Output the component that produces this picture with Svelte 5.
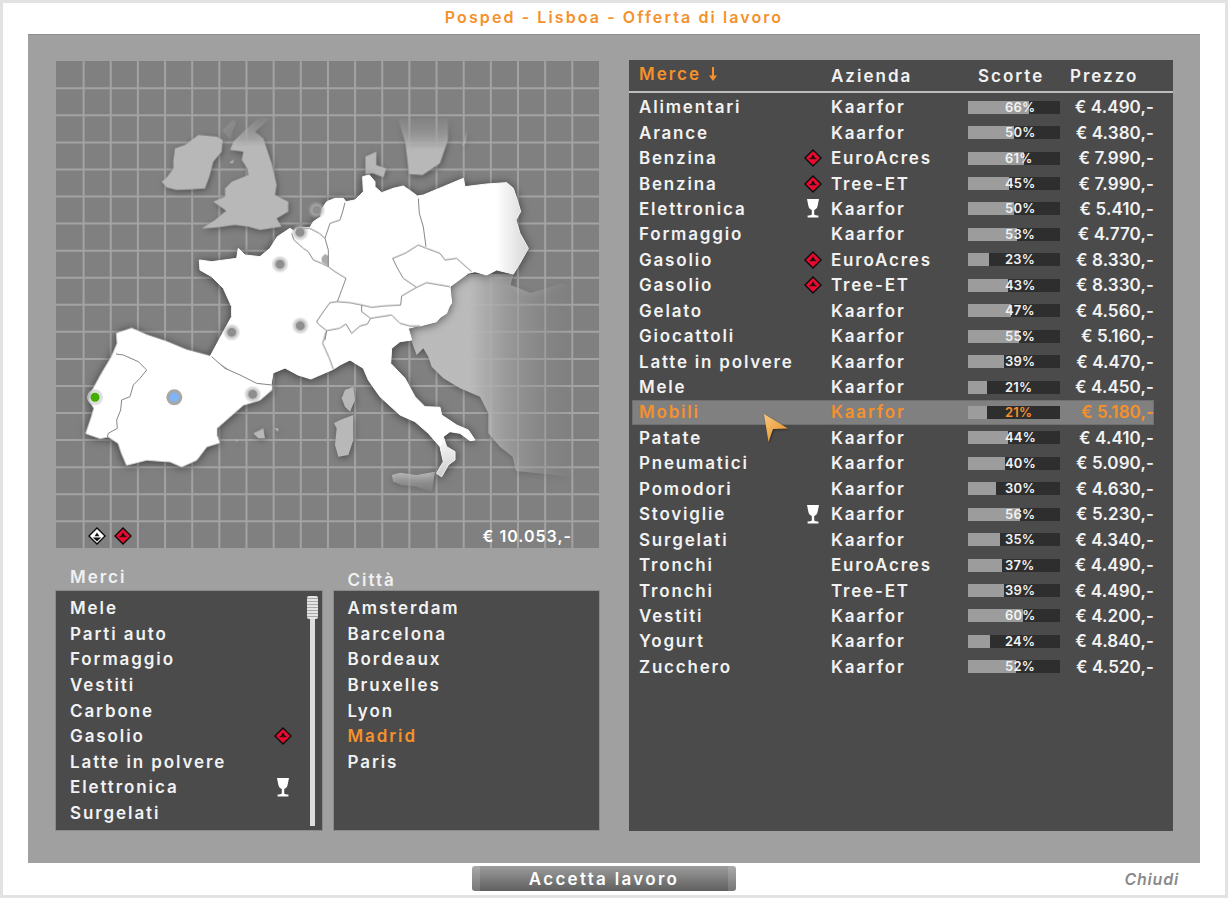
<script>
  const rows = [
    ['Alimentari', '', 'Kaarfor', 66, '€ 4.490,-'],
    ['Arance', '', 'Kaarfor', 50, '€ 4.380,-'],
    ['Benzina', 'd', 'EuroAcres', 61, '€ 7.990,-'],
    ['Benzina', 'd', 'Tree-ET', 45, '€ 7.990,-'],
    ['Elettronica', 'g', 'Kaarfor', 50, '€ 5.410,-'],
    ['Formaggio', '', 'Kaarfor', 53, '€ 4.770,-'],
    ['Gasolio', 'd', 'EuroAcres', 23, '€ 8.330,-'],
    ['Gasolio', 'd', 'Tree-ET', 43, '€ 8.330,-'],
    ['Gelato', '', 'Kaarfor', 47, '€ 4.560,-'],
    ['Giocattoli', '', 'Kaarfor', 55, '€ 5.160,-'],
    ['Latte in polvere', '', 'Kaarfor', 39, '€ 4.470,-'],
    ['Mele', '', 'Kaarfor', 21, '€ 4.450,-'],
    ['Mobili', '', 'Kaarfor', 21, '€ 5.180,-'],
    ['Patate', '', 'Kaarfor', 44, '€ 4.410,-'],
    ['Pneumatici', '', 'Kaarfor', 40, '€ 5.090,-'],
    ['Pomodori', '', 'Kaarfor', 30, '€ 4.630,-'],
    ['Stoviglie', 'g', 'Kaarfor', 56, '€ 5.230,-'],
    ['Surgelati', '', 'Kaarfor', 35, '€ 4.340,-'],
    ['Tronchi', '', 'EuroAcres', 37, '€ 4.490,-'],
    ['Tronchi', '', 'Tree-ET', 39, '€ 4.490,-'],
    ['Vestiti', '', 'Kaarfor', 60, '€ 4.200,-'],
    ['Yogurt', '', 'Kaarfor', 24, '€ 4.840,-'],
    ['Zucchero', '', 'Kaarfor', 52, '€ 4.520,-']
  ];
  const goods = [['Mele', ''], ['Parti auto', ''], ['Formaggio', ''], ['Vestiti', ''], ['Carbone', ''], ['Gasolio', 'd'], ['Latte in polvere', ''], ['Elettronica', 'g'], ['Surgelati', '']];
  const cities = ['Amsterdam', 'Barcelona', 'Bordeaux', 'Bruxelles', 'Lyon', 'Madrid', 'Paris'];
  const dots = [[316.7, 210], [300, 232.3], [280, 264.3], [300.3, 325.7], [231.7, 332.3], [252.7, 394.3]];
  const gridX = Array.from({ length: 19 }, (_, i) => 83.6 + 27.15 * i);
  const gridY = Array.from({ length: 17 }, (_, i) => 88.3 + 27.06 * i);
</script>

{#snippet diamond(kind)}
  <svg class="diamond" viewBox="0 0 18 18" aria-hidden="true">
    <polygon points="9,0 18,9 9,18 0,9" fill="#0c0c0c" />
    <polygon points="9,1.9 16.1,9 9,16.1 1.9,9" fill={kind === 'white' ? '#fff' : '#ea0a30'} />
    <polygon points="9,5.6 11.4,9.2 6.6,9.2" fill="#111" />
    {#if kind === 'white'}
      <polygon points="4.8,10.4 13.2,10.4 9,14.4" fill="#111" />
    {:else}
      <rect x="5.6" y="9.2" width="6.8" height="1" fill="#111" />
    {/if}
  </svg>
{/snippet}

{#snippet goblet()}
  <svg class="goblet" viewBox="0 0 14 19" aria-hidden="true">
    <path d="M1 0H13L11.6 7C11 9.6 9.4 10.6 8.2 10.9V15.4C9 16 10.6 16.4 12.4 16.6V18.6H1.6V16.6C3.4 16.4 5 16 5.8 15.4V10.9C4.6 10.6 3 9.6 2.4 7Z" fill="#fff" />
  </svg>
{/snippet}

<div class="frame">
  <h1 class="title">Posped - Lisboa - Offerta di lavoro</h1>

  <main class="panel">
    <section class="left">
      <div class="map">
        <svg class="land" viewBox="56 61 543 487" aria-hidden="true">
          <defs>
            <linearGradient id="balkan" gradientUnits="userSpaceOnUse" x1="450" y1="0" x2="760" y2="0">
              <stop offset="0" stop-color="#bdbdbd" stop-opacity=".97" />
              <stop offset="1" stop-color="#b4b4b4" stop-opacity="0" />
            </linearGradient>
            <linearGradient id="uk" gradientUnits="userSpaceOnUse" x1="0" y1="15" x2="0" y2="110">
              <stop offset="0" stop-color="#b8b8b8" stop-opacity="0" />
              <stop offset="1" stop-color="#b8b8b8" />
            </linearGradient>
            <linearGradient id="sweden" gradientUnits="userSpaceOnUse" x1="0" y1="225" x2="0" y2="330">
              <stop offset="0" stop-color="#b8b8b8" stop-opacity="0" />
              <stop offset="1" stop-color="#b8b8b8" />
            </linearGradient>
            <linearGradient id="sicily" gradientUnits="userSpaceOnUse" x1="0" y1="515" x2="0" y2="578">
              <stop offset="0" stop-color="#b8b8b8" />
              <stop offset="1" stop-color="#b8b8b8" stop-opacity="0" />
            </linearGradient>
            <linearGradient id="poland" gradientUnits="userSpaceOnUse" x1="650" y1="0" x2="760" y2="0">
              <stop offset="0" stop-color="#d0d0d0" stop-opacity="0" />
              <stop offset="1" stop-color="#d0d0d0" />
            </linearGradient>
            <linearGradient id="calabria" gradientUnits="userSpaceOnUse" x1="0" y1="400" x2="0" y2="530">
              <stop offset="0" stop-color="#ccc" stop-opacity="0" />
              <stop offset="1" stop-color="#ccc" />
            </linearGradient>
            <radialGradient id="halo">
              <stop offset="0.4" stop-color="#b0b0b0" />
              <stop offset="1" stop-color="#b0b0b0" stop-opacity="0" />
            </radialGradient>
          </defs>

          <g stroke="#a3a3a3" stroke-width="2">
            {#each gridX as x}<line x1={x} x2={x} y1="61" y2="548" />{/each}
            {#each gridY as y}<line x1="56" x2="599" y1={y} y2={y} />{/each}
          </g>

          <g class="soft">
            <path transform="translate(320 300) scale(.3333)" fill="url(#balkan)" d="M300 0 340 -30 450 -78 580 -78 572 -45 633 -21 731 -52 795 9 800 300 763 530 588 513 578 470 540 440 505 400 505 340 480 290 420 265 370 235 335 200 325 170 310 145 290 165 275 125 265 85Z" />
            <g transform="translate(160 110) scale(.3333)">
              <path fill="#b8b8b8" d="M5 215 22 200 40 175 40 150 45 115 75 105 115 75 170 80 188 90 185 125 160 155 148 200 135 235 90 238 50 240 20 232Z" />
              <path fill="url(#uk)" d="M125 355 165 330 195 305 235 305 205 320 195 300 160 275 195 260 195 235 215 215 265 195 262 175 245 150 250 125 210 120 220 95 250 65 300 20 330 25 285 65 310 85 335 160 350 225 345 255 385 275 385 305 350 325 365 350 300 360 265 350 225 345 170 352Z" />
              <path fill="#b8b8b8" d="M208 158 222 148 218 160Z" />
              <path fill="#b8b8b8" opacity=".25" d="M185 62 220 28 228 38 210 85 196 72Z" />
            </g>
            <g transform="translate(40 40) scale(.3636 .3333)">
              <path fill="#b8b8b8" d="M895 404 895 350 925 335 925 375 952 385 945 412 915 400Z" />
              <path fill="url(#sweden)" d="M985 235 1122 235 1122 300 1100 370 1052 405 1015 402 1005 310Z" />
              <path fill="url(#sweden)" d="M1160 320 1175 270 1170 310Z" />
            </g>
            <g transform="translate(320 300) scale(.3333)">
              <path fill="#b8b8b8" d="M75 270 100 260 105 300 90 335 75 320 65 295Z" />
              <path fill="#b8b8b8" d="M60 360 100 345 100 420 85 465 55 470 45 435 50 385 42 370Z" />
              <path fill="url(#sicily)" d="M215 525 240 518 290 525 345 515 335 575 290 560 245 555 220 545Z" />
            </g>
            <g transform="translate(80 320) scale(.3333)" fill="#b8b8b8">
              <path d="M520 340 550 325 555 355 535 355Z" />
              <path d="M582 325 595 325 595 335Z" />
              <path d="M465 360 475 358 472 365Z" />
            </g>
          </g>

          <g class="shadow" fill="#fff" stroke="#fff" stroke-width="3" stroke-linejoin="round">
            <path transform="translate(80 320) scale(.3333)" d="M110 40 155 25 200 45 260 65 320 90 395 110 435 145 480 165 530 190 575 195 575 210 540 240 490 255 450 290 410 325 410 345 418 368 380 380 350 420 305 440 270 425 200 420 140 435 125 400 115 370 85 350 60 355 18 340 35 290 42 265 28 240 35 215 65 160 95 110 112 70Z" />
            <path transform="translate(190 210) scale(.3333)" d="M28 150 65 155 140 145 145 115 165 135 210 140 240 115 262 80 300 55 330 75 410 130 470 205 445 275 380 345 405 360 510 360 510 450 70 450 60 440 95 375 125 320 125 290 100 235 65 200 30 180Z" />
            <path stroke-width="1" d="M232 320 345 300 345 360 333 368 320 375 311 379 298 375 285 368 273 373 271 385 255 383 237 375 211 357 222 338Z" />
            <path transform="translate(280 170) scale(.3333)" d="M0 198 35 190 48 175 90 172 100 155 122 140 125 118 140 95 165 85 190 85 198 95 225 90 250 65 248 20 268 15 285 35 285 50 305 68 340 55 370 48 395 65 412 78 430 75 490 50 550 25 555 50 620 42 680 38 700 55 715 100 722 125 708 150 720 190 745 235 720 280 700 312 650 300 620 315 585 305 565 310 510 350 515 400 490 430 470 455 420 468 380 470 390 510 135 510 0 510Z" />
            <path transform="translate(320 300) scale(.3333)" d="M0 0 395 0 380 40 340 65 265 85 275 120 240 125 215 145 212 190 255 235 285 290 315 320 360 322 365 345 410 375 445 390 465 420 450 422 420 400 390 395 370 410 380 440 405 455 405 480 385 495 365 530 350 520 370 485 360 440 325 400 285 365 240 345 180 290 145 240 130 205 90 180 60 195 40 208 0 225Z" />
          </g>

          <g transform="translate(280 170) scale(.3333)">
            <path fill="url(#poland)" d="M650 40 680 38 700 55 715 100 722 125 708 150 720 190 745 235 720 280 700 312 650 300Z" />
            <path fill="#ababab" d="M125 262 135 252 145 258 145 288 125 276Z" />
            <g fill="none" stroke="#858585" stroke-width="3" stroke-linejoin="round">
              <path d="M35 190 42 210 70 235 85 245 100 270 125 280 145 290 165 305 198 325 185 360 172 395" />
              <path d="M48 175 90 175 118 190 135 205 145 240 145 290" />
              <path d="M135 205 150 160 180 150 188 125 195 98" />
              <path d="M415 85 418 130 430 170 438 230" />
              <path d="M338 265 375 250 415 225 440 235 480 250 495 270 530 265 575 305" />
              <path d="M338 265 350 290 370 325 410 352 440 338 510 350" />
              <path d="M410 352 365 378 362 405 310 408 275 412 245 405" />
              <path d="M172 395 210 398 245 405 245 425 272 445 262 462 240 468 215 490 198 462 178 475 140 482 115 462 110 455 130 425 150 398Z" />
              <path d="M272 445 335 435 360 460 390 468 420 468" />
              <path d="M140 482 135 510" />
            </g>
          </g>
          <g transform="translate(320 300) scale(.3333)">
            <path fill="url(#calabria)" d="M372 420 380 440 405 455 405 480 385 495 365 530 350 520 370 485 362 440Z" />
            <path fill="none" stroke="#858585" stroke-width="3" d="M18 95 8 130 28 175 40 208" />
          </g>
          <g transform="translate(80 320) scale(.3333)" fill="none" stroke="#858585" stroke-width="3" stroke-linejoin="round">
            <path d="M108 102 130 105 175 125 200 150 180 175 160 195 150 230 125 240 122 270 110 300 112 325 85 340 82 352" />
            <path d="M395 110 435 145 480 165 530 190 575 195" />
          </g>

          {#each dots as d}
            <circle cx={d[0]} cy={d[1]} r="9" fill="url(#halo)" />
            <circle cx={d[0]} cy={d[1]} r="4.3" fill="#8e8e8e" />
          {/each}
          <circle cx="174.3" cy="397.3" r="8" fill="#8a8a8a" opacity=".75" />
          <circle cx="174.3" cy="397.3" r="4.8" fill="#7fb4f7" />
          <circle cx="95" cy="397.3" r="8" fill="#d4d4d4" opacity=".75" />
          <circle cx="95" cy="397.3" r="4.5" fill="#43b000" />
        </svg>
        <div class="icons">
          {@render diamond('white')}
          {@render diamond('red')}
        </div>
        <div class="money">€ 10.053,-</div>
      </div>

      <div class="lists">
        <div class="col">
          <div class="cap">Merci</div>
          <div class="box goods">
            <ul>
              {#each goods as g}
                <li>
                  <span>{g[0]}</span>
                  <span class="ico">{#if g[1] === 'd'}{@render diamond('red')}{:else if g[1] === 'g'}{@render goblet()}{/if}</span>
                </li>
              {/each}
            </ul>
            <div class="scroll"><div class="thumb"></div><div class="rail"></div></div>
          </div>
        </div>
        <div class="col">
          <div class="cap city">Città</div>
          <div class="box">
            <ul>
              {#each cities as c}
                <li class:on={c === 'Madrid'}><span>{c}</span></li>
              {/each}
            </ul>
          </div>
        </div>
      </div>
    </section>

    <section class="right">
      <div class="thead">
        <span class="sorted">Merce <svg class="arrow" viewBox="0 0 8 14" aria-hidden="true"><path d="M3 0H5V8.5H8L4 14 0 8.5H3Z" fill="#f5912b" /></svg></span>
        <span>Azienda</span>
        <span class="sco">Scorte</span>
        <span>Prezzo</span>
      </div>
      <div class="tbody">
        {#each rows as r, i}
          <div class="row" class:sel={i === 12}>
            <span class="name">{r[0]}</span>
            <span class="ico">{#if r[1] === 'd'}{@render diamond('red')}{:else if r[1] === 'g'}{@render goblet()}{/if}</span>
            <span class="comp">{r[2]}</span>
            <span class="bar"><span class="fill" style="width:{r[3]}%"></span><span class="pct">{r[3]}%</span></span>
            <span class="price">{r[4]}</span>
          </div>
        {/each}
        <svg class="cursor" viewBox="0 0 26 29" aria-hidden="true">
          <defs>
            <linearGradient id="cur" x1="0" y1="0" x2="1" y2="1">
              <stop offset="0" stop-color="#f9c77e" />
              <stop offset="1" stop-color="#e08a1c" />
            </linearGradient>
          </defs>
          <path d="M1 0 25 14.5 10 15 5.5 28Z" fill="url(#cur)" />
        </svg>
      </div>
    </section>
  </main>

  <footer class="foot">
    <span></span>
    <button class="accept">Accetta lavoro</button>
    <span class="close">Chiudi</span>
  </footer>
</div>

<style>
  :global(body) { margin: 0; background: #fff; }
  .frame {
    box-sizing: border-box;
    width: 1228px;
    height: 898px;
    border: 3px solid #e2e2e2;
    background: #fff;
    display: flex;
    flex-direction: column;
    font-family: Inter, "Liberation Sans", sans-serif;
    font-weight: 600;
    overflow: hidden;
  }
  .title {
    margin: 0;
    height: 31px;
    line-height: 28px;
    text-align: center;
    color: #f5912b;
    font-size: 16px;
    font-weight: 600;
    letter-spacing: 2.1px;
  }
  .panel {
    box-sizing: border-box;
    height: 829px;
    margin: 0 25px;
    background: #a0a0a0;
    border-top: 1px solid #8e8e8e;
    padding: 25px 27px 32px 27px;
    display: flex;
    gap: 29px;
  }
  .left { width: 545px; display: flex; flex-direction: column; }
  .map {
    position: relative;
    box-sizing: border-box;
    width: 543px;
    height: 487px;
    margin: 1px 1px 0;
    background-color: #808080;
    overflow: hidden;
  }
  .land { position: absolute; inset: 0; width: 100%; height: 100%; }
  .soft { filter: drop-shadow(1px 2px 3px rgba(0, 0, 0, .35)); }
  .shadow { filter: drop-shadow(0 1px 5px rgba(0, 0, 0, .55)); }
  .icons {
    position: absolute;
    left: 32px;
    top: 466px;
    display: flex;
    gap: 8px;
  }
  .money {
    position: absolute;
    right: 27px;
    top: 465px;
    color: #fff;
    font-size: 16px;
    line-height: 20px;
    letter-spacing: 1px;
  }
  .lists { display: flex; gap: 10px; flex: 1; }
  .col { display: flex; flex-direction: column; flex: 1; min-width: 0; }
  .cap {
    height: 42px;
    box-sizing: border-box;
    padding: 19px 0 0 15px;
    line-height: 20px;
    color: #f0f0f0;
    font-size: 17px;
    letter-spacing: 2px;
  }
  .cap.city { padding-top: 22px; }
  .box {
    flex: 1;
    box-sizing: border-box;
    background: #4b4b4b;
    border: 1px solid #8b8b8b;
    display: flex;
    padding: 4.5px 0 0 14px;
  }
  ul { list-style: none; margin: 0; padding: 0; flex: 1; }
  li {
    height: 25.6px;
    display: flex;
    align-items: center;
    justify-content: space-between;
    color: #f2f2f2;
    font-size: 17px;
    letter-spacing: 1.9px;
  }
  li.on { color: #f5912b; }
  .goods li { padding-right: 12px; }
  .scroll { width: 11px; margin: 0 4px 0 3px; display: flex; flex-direction: column; align-items: center; height: 230px; }
  .thumb {
    width: 11px;
    height: 23px;
    border-radius: 2px;
    background: repeating-linear-gradient(#e4e4e4 0 2px, #a8a8a8 2px 3px);
  }
  .rail { width: 5px; flex: 1; background: #dedede; }
  .diamond { width: 18px; height: 18px; display: block; flex: none; }
  .goblet { width: 14px; height: 19px; display: block; flex: none; }
  .ico { display: flex; justify-content: center; width: 18px; justify-self: center; }
  .right { width: 544px; display: flex; flex-direction: column; }
  .thead {
    height: 31px;
    background: #4b4b4b;
    display: grid;
    grid-template-columns: 192px 147px 92px 1fr;
    align-items: center;
    padding-left: 10px;
    color: #f2f2f2;
    font-size: 17px;
    letter-spacing: 2px;
    border-bottom: 2px solid #bdbdbd;
  }
  .sorted { color: #f5912b; display: flex; align-items: center; gap: 8px; margin-top: -3px; }
  .arrow { width: 8px; height: 14px; }
  .tbody {
    position: relative;
    flex: 1;
    background: #4b4b4b;
    padding: 1.5px 19px 0 3px;
  }
  .row {
    box-sizing: border-box;
    height: 25.45px;
    display: grid;
    grid-template-columns: 160px 28px 141px 92px 1fr;
    align-items: center;
    padding-left: 7px;
    color: #f2f2f2;
    font-size: 17px;
    letter-spacing: 1.8px;
    white-space: nowrap;
  }
  .row.sel { background: #808080; color: #f5912b; box-shadow: inset 0 0 0 1px #707070; }
  .comp { padding-left: 4px; }
  .bar { position: relative; display: block; height: 13px; background: #2e2e2e; }
  .fill { position: absolute; left: 0; top: 0; bottom: 0; background: #9c9c9c; }
  .pct {
    position: absolute;
    left: 37px;
    top: -2px;
    line-height: 16px;
    font-size: 13px;
    letter-spacing: .2px;
    color: #f2f2f2;
  }
  .sel .pct { color: #f5912b; }
  .price { text-align: right; letter-spacing: .1px; }
  .cursor {
    position: absolute;
    left: 134px;
    top: 321px;
    width: 26px;
    height: 29px;
    filter: drop-shadow(1px 1px 1px rgba(0, 0, 0, .4));
  }
  .foot {
    flex: 1;
    display: grid;
    grid-template-columns: 469px 264px 1fr;
    align-items: start;
    padding-top: 3px;
  }
  .accept {
    height: 25px;
    width: 264px;
    padding: 0;
    border: 0;
    border-radius: 3px;
    color: #fff;
    font: inherit;
    font-size: 17px;
    letter-spacing: 2.3px;
    background:
      linear-gradient(90deg, rgba(255,255,255,.14) 8px, transparent 8px, transparent 256px, rgba(255,255,255,.14) 256px),
      linear-gradient(#9c9c9c, #5f5f5f);
  }
  .close {
    text-align: right;
    margin-right: 46px;
    margin-top: 3px;
    color: #8a8a8a;
    font-style: italic;
    font-size: 16px;
    letter-spacing: .8px;
  }
</style>
